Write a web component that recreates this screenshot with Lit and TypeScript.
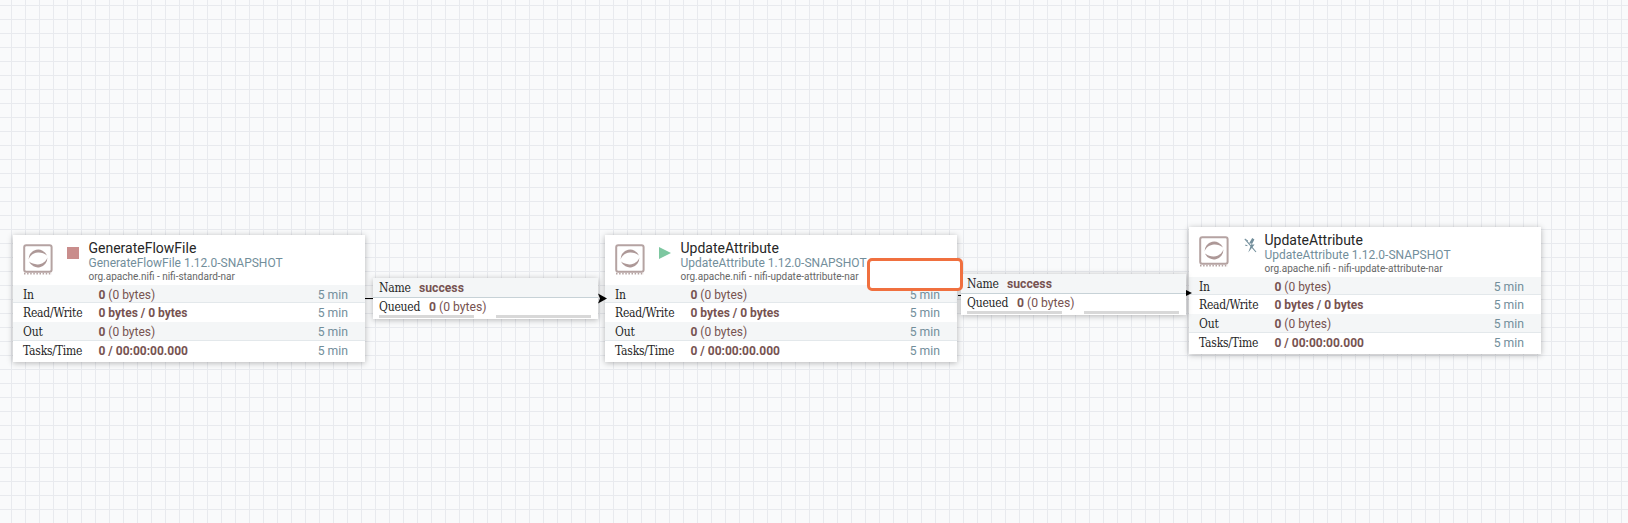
import { LitElement, html, css, svg } from "lit";
import { customElement } from "lit/decorators.js";
import { styleMap } from "lit/directives/style-map.js";

const procIcon = html`<svg class="proc-icon" width="30" height="31" viewBox="0 0 30 31">
  <rect x="1.2" y="1.2" width="27.4" height="26.6" rx="2" fill="none" stroke="#b5a3a2" stroke-width="2"/>
  <path d="M1 29.6H29" stroke="#b5a3a2" stroke-width="1.6" stroke-dasharray="1.5 1.6" fill="none"/>
  <path d="M5.6 15.5A9.6 9.6 0 0 1 24 11.4C21.4 9.6 18.4 8.4 15 8.6 10.6 8.9 7 11.4 5.6 15.5Z" fill="#ad9897"/>
  <path d="M24.4 13.5A9.6 9.6 0 0 1 6 17.6C8.6 19.4 11.6 20.6 15 20.4 19.4 20.1 23 17.6 24.4 13.5Z" fill="#ad9897"/>
</svg>`;

const stopIcon = html`<span class="stop"></span>`;
const playIcon = html`<svg class="state" width="12" height="12" viewBox="0 0 12 12"><path d="M0 0L12 6L0 12Z" fill="#7dc7a0"/></svg>`;
const invalidIcon = html`<svg class="state invalid" width="13" height="15" viewBox="0 0 13 15">
  <path d="M.8.8L12 14" stroke="#728e9b" stroke-width="1.1" fill="none"/>
  <path d="M8.2 0L5 5.6H7.6L4.2 14.6L10.6 6.4H7.8L10.4 1.4Z" fill="#728e9b"/>
  <path d="M3.4 7.6L1.2 7.2M2.4 1.8L4 3.2" stroke="#728e9b" stroke-width="1" fill="none"/>
</svg>`;

interface Proc { x: number; y: number; name: string; type: string; bundle: string; icon: unknown; }

const procs: Proc[] = [
  { x: 13, y: 235, name: "GenerateFlowFile", type: "GenerateFlowFile 1.12.0-SNAPSHOT", bundle: "org.apache.nifi - nifi-standard-nar", icon: stopIcon },
  { x: 605, y: 235, name: "UpdateAttribute", type: "UpdateAttribute 1.12.0-SNAPSHOT", bundle: "org.apache.nifi - nifi-update-attribute-nar", icon: playIcon },
  { x: 1189, y: 227, name: "UpdateAttribute", type: "UpdateAttribute 1.12.0-SNAPSHOT", bundle: "org.apache.nifi - nifi-update-attribute-nar", icon: invalidIcon },
];

const conns = [{ x: 373, y: 278 }, { x: 961, y: 274 }];

@customElement("app-root")
export class AppRoot extends LitElement {
  static styles = css`
    :host {
      display: block;
      position: relative;
      width: 1628px;
      height: 523px;
      overflow: hidden;
      background-color: #f9fafb;
      background-image:
        linear-gradient(to right, #e8eaee 1px, transparent 1px),
        linear-gradient(to bottom, #e8eaee 1px, transparent 1px);
      background-size: 14px 14px;
      background-position: 11px 5px;
      font-family: Roboto, sans-serif;
    }
    .node {
      position: absolute;
      background: #fff;
      box-shadow: 0 1px 6px rgba(0, 0, 0, 0.28);
    }
    .proc { width: 352px; height: 127px; display: flex; flex-direction: column; }
    .head {
      height: 50px;
      flex: none;
      display: flex;
      padding-left: 10px;
      box-sizing: border-box;
    }
    .proc-icon { margin-top: 9px; flex: none; }
    .state-col { width: 35.5px; flex: none; display: flex; justify-content: center; align-items: flex-start; padding-left: 5px; box-sizing: border-box; }
    .stop { width: 12px; height: 12px; background: #c98d8c; margin-top: 12px; }
    .state { margin-top: 12px; }
    .invalid { margin-top: 11px; margin-left: 2px; }
    .titles { padding-top: 5px; min-width: 0; white-space: nowrap; }
    .title { font-size: 14px; line-height: 17px; color: #262626; }
    .type { font-size: 12px; line-height: 13px; color: #728e9b; }
    .bundle { font-size: 10px; line-height: 14px; color: #666; }
    .row {
      flex: none;
      height: 19px;
      display: grid;
      grid-template-columns: 75.5px 1fr auto;
      align-items: center;
      padding: 0 17px 0 10px;
      color: #775351;
      box-sizing: border-box;
    }
    .row.odd { background: #f4f6f7; border-bottom: 1px solid #e3e8eb; padding-top: 1px; }
    .row.first { height: 18px; padding-top: 3px; }
    .row.last { height: 21px; padding-bottom: 1px; }
    .label, .conn-label {
      font-family: "DejaVu Serif Condensed", "DejaVu Serif", serif;
      font-stretch: condensed;
      font-size: 12px;
      letter-spacing: -0.2px;
      color: #262626;
      white-space: nowrap;
    }
    .val { white-space: nowrap; font-size: 12px; }
    .val b { font-weight: 700; }
    .time { color: #728e9b; font-size: 12.2px; }
    .conn { width: 225px; height: 41px; display: flex; flex-direction: column; }
    .conn-row {
      padding-left: 6px;
      display: flex;
      align-items: center;
      color: #775351;
      font-size: 12.2px;
    }
    .conn-row.top { height: 20px; box-sizing: border-box; background: #f4f6f7; border-bottom: 1px solid #c7d2d7; }
    .conn-row.mid { flex: 1; }
    .name-label { width: 40px; flex: none; }
    .q-label { width: 50px; flex: none; }
    .bars { display: flex; gap: 22px; padding: 0 7px 1px 6px; height: 3px; flex: none; }
    .bars i { display: block; flex: 1; background: #d8d8d8; }
    .overlay { position: absolute; inset: 0; pointer-events: none; }
    .callout {
      position: absolute;
      left: 867px;
      top: 258px;
      width: 96px;
      height: 33px;
      box-sizing: border-box;
      background: #fff;
      border: 3px solid #f0703f;
      border-radius: 5px;
    }
  `;

  private row(label: string, cls: string, val: unknown) {
    return html`<div class="row ${cls}">
      <span class="label">${label}</span>
      <span class="val">${val}</span>
      <span class="time">5 min</span>
    </div>`;
  }

  private proc(p: Proc) {
    return html`<div class="node proc" style=${styleMap({ left: p.x + "px", top: p.y + "px" })}>
      <div class="head">
        ${procIcon}
        <div class="state-col">${p.icon}</div>
        <div class="titles">
          <div class="title">${p.name}</div>
          <div class="type">${p.type}</div>
          <div class="bundle">${p.bundle}</div>
        </div>
      </div>
      ${this.row("In", "odd first", html`<b>0</b> (0 bytes)`)}
      ${this.row("Read/Write", "", html`<b>0 bytes / 0 bytes</b>`)}
      ${this.row("Out", "odd", html`<b>0</b> (0 bytes)`)}
      ${this.row("Tasks/Time", "last", html`<b>0 / 00:00:00.000</b>`)}
    </div>`;
  }

  private conn(c: { x: number; y: number }) {
    return html`<div class="node conn" style=${styleMap({ left: c.x + "px", top: c.y + "px" })}>
      <div class="conn-row top"><span class="conn-label name-label">Name</span><b>success</b></div>
      <div class="conn-row mid"><span class="conn-label q-label">Queued</span><span><b>0</b> (0 bytes)</span></div>
      <div class="bars"><i></i><i></i></div>
    </div>`;
  }

  render() {
    return html`
      ${procs.map((p) => this.proc(p))}
      ${conns.map((c) => this.conn(c))}
      <svg class="overlay" width="1628" height="523">
        ${svg`<path d="M365 298.5H373" stroke="#000" stroke-width="1"/>
        <path d="M598 293.5L607 298.5L598 303.5L600 298.5Z" fill="#000"/>
        <path d="M958 295.5H961" stroke="#000" stroke-width="1"/>
        <path d="M1186 290L1192 293L1186 296Z" fill="#000"/>`}
      </svg>
      <div class="callout"></div>
    `;
  }
}
